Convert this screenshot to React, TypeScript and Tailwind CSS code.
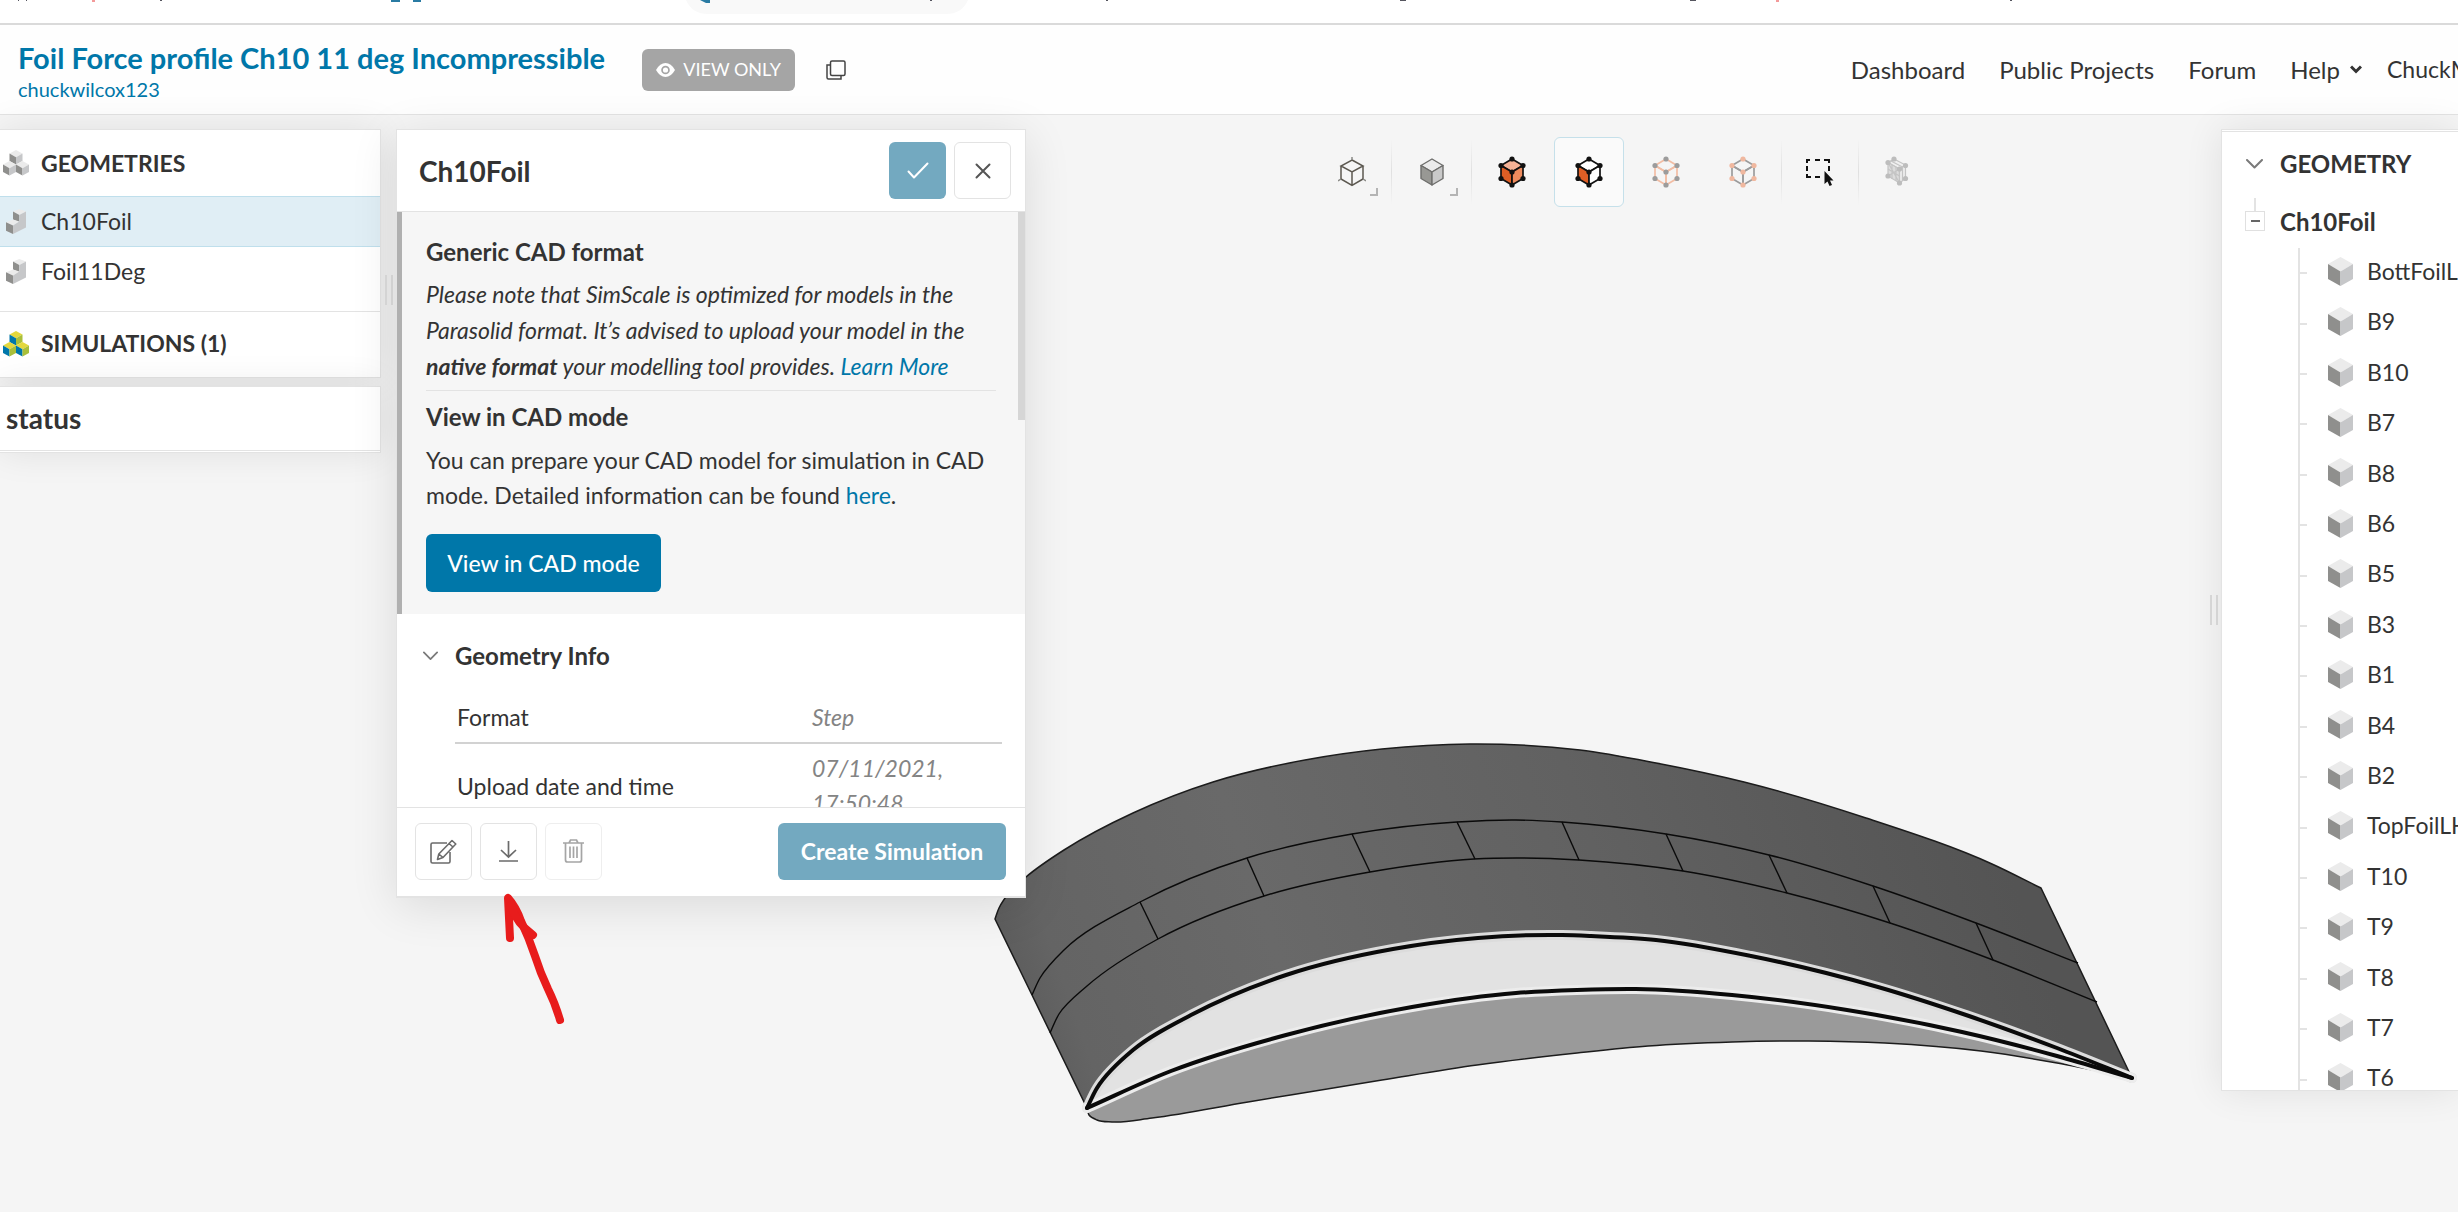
import { ReactNode } from "react";
import { clsx } from "clsx";

type Point = [number, number];

const BODIES = [
    "BottFoilLH", "B9", "B10", "B7", "B8", "B6", "B5", "B3", "B1", "B4", "B2",
    "TopFoilLH", "T10", "T9", "T8", "T7", "T6",
];

const GREY = { top: "#ebebeb", left: "#8f8f8d", right: "#c6c7c9" };
const COLOR = { top: "#e3d83d", left: "#0077ab", right: "#a9bf3a" };

// curves of the foil model, in viewport coordinates
const OUTLINE: Point[] = [[995, 919], [999, 908], [1009, 893], [1026, 877], [1064, 850], [1133, 813], [1213, 782], [1305, 760], [1382, 749], [1470, 744], [1580, 750], [1656, 763], [1744, 782], [1866, 818], [1992, 864], [2041, 888]];
const SEAM_TOP: Point[] = [[1032, 995], [1040, 978], [1064, 950], [1140, 902], [1247, 858], [1352, 834], [1457, 822], [1516, 820], [1562, 822], [1666, 834], [1769, 855], [1873, 886], [1976, 923], [2078, 963]];
const SEAM_BOTTOM: Point[] = [[1050, 1033], [1059, 1014], [1087, 986], [1158, 939], [1264, 896], [1370, 872], [1474, 859], [1523, 858], [1579, 860], [1683, 871], [1787, 893], [1890, 923], [1993, 960], [2097, 1002]];
const FACE_TOP: Point[] = [[1087, 1108], [1097, 1088], [1133, 1050], [1191, 1015], [1286, 975], [1393, 949], [1478, 938], [1562, 935], [1591, 936], [1656, 940], [1751, 956], [1878, 987], [1966, 1015], [2057, 1048], [2132, 1078]];
const FACE_BOTTOM: Point[] = [[1087, 1108], [1171, 1071], [1286, 1035], [1412, 1007], [1516, 993], [1577, 990], [1636, 989], [1732, 995], [1847, 1010], [1962, 1032], [2057, 1056], [2132, 1078]];
const BELLY: Point[] = [[1087, 1108], [1089, 1115], [1097, 1120], [1112, 1122], [1152, 1118], [1248, 1102], [1382, 1080], [1477, 1065], [1577, 1053], [1648, 1046], [1732, 1042], [1809, 1041], [1885, 1043], [1981, 1051], [2057, 1063], [2132, 1078]];
const RIBS: [Point, Point][] = [
    [[1140, 902], [1158, 939]],
    [[1247, 858], [1264, 896]],
    [[1352, 834], [1370, 872]],
    [[1457, 822], [1475, 859]],
    [[1562, 822], [1579, 860]],
    [[1666, 834], [1683, 871]],
    [[1769, 855], [1787, 893]],
    [[1873, 886], [1890, 923]],
    [[1976, 923], [1993, 960]],
];

const distance = (a: Point, b: Point) => Math.hypot(b[0] - a[0], b[1] - a[1]);

// unit-speed tangent at point i, weighted by the lengths of its two chords
const tangent = (pts: Point[], i: number): Point => {
    const a = pts[i - 1];
    const p = pts[i];
    const b = pts[i + 1];
    if(!a || !b){
        const [from, to] = a ? [a, p] : [p, b];
        const d = distance(from, to);
        return [(to[0] - from[0]) / d, (to[1] - from[1]) / d];
    }
    const d1 = distance(a, p);
    const d2 = distance(p, b);
    const mix = (k: 0 | 1) => ((p[k] - a[k]) / d1 * d2 + (b[k] - p[k]) / d2 * d1) / (d1 + d2);
    return [mix(0), mix(1)];
}

const curve = (pts: Point[]) => {
    return pts.slice(1).map((p, i) => {
        const from = pts[i];
        const t0 = tangent(pts, i);
        const t1 = tangent(pts, i + 1);
        const h = distance(from, p) / 3;
        return `C${from[0] + t0[0] * h},${from[1] + t0[1] * h} ${p[0] - t1[0] * h},${p[1] - t1[1] * h} ${p[0]},${p[1]}`;
    }).join(" ");
}

const path = (pts: Point[]) => `M${pts[0].join(",")} ${curve(pts)}`;
const back = (pts: Point[]) => curve([...pts].reverse());

const FoilModel = () => (
    <svg
        viewBox="0 115 2458 1097"
        className="absolute inset-0 h-full w-full"
        role="img"
        aria-label="Ch10Foil model"
    >
        <defs>
            <linearGradient id="skin" gradientUnits="userSpaceOnUse" x1="1020" y1="1060" x2="2070" y2="700">
                <stop offset="0" stopColor="#5a5a5a" />
                <stop offset="0.06" stopColor="#646464" />
                <stop offset="0.25" stopColor="#696969" />
                <stop offset="0.55" stopColor="#616161" />
                <stop offset="0.9" stopColor="#545454" />
            </linearGradient>
        </defs>
        <path d={`${path(OUTLINE)} L2132,1078 ${back(FACE_TOP)} Z`} fill="url(#skin)" stroke="#1c1c1c" strokeWidth="1.5" />
        <path d={`${path(FACE_BOTTOM)} ${back(BELLY)} Z`} fill="#9a9a9a" stroke="#1c1c1c" strokeWidth="1.5" />
        <path d={`${path(FACE_TOP)} ${back(FACE_BOTTOM)} Z`} fill="#e2e2e2" />
        <g fill="none" stroke="#0a0a0a" strokeWidth="1.4">
            <path d={path(SEAM_TOP)} />
            <path d={path(SEAM_BOTTOM)} />
            {RIBS.map(([a, b]) => <path key={a[0]} d={`M${a.join(",")} L${b.join(",")}`} />)}
        </g>
        <g fill="none" strokeLinecap="round">
            <path d={path(FACE_TOP)} stroke="#dcdcdc" strokeWidth="10" />
            <path d={path(FACE_BOTTOM)} stroke="#ececec" strokeWidth="10" />
            <path d={path(FACE_TOP)} stroke="#0a0a0a" strokeWidth="4" />
            <path d={path(FACE_BOTTOM)} stroke="#0a0a0a" strokeWidth="4" />
        </g>
    </svg>
)

const Cube = ({ x = 0, y = 0, c = GREY }) => (
    <g transform={`translate(${x} ${y})`}>
        <path d="M6.5 0 13 3.5 6.5 7.2 0 3.5Z" fill={c.top} />
        <path d="M0 3.5 6.5 7.2V14.5L0 11Z" fill={c.left} />
        <path d="M13 3.5 6.5 7.2V14.5L13 11Z" fill={c.right} />
    </g>
)

const CubesIcon = ({ c = GREY }) => (
    <svg width="26" height="26" viewBox="0 0 26 26" className="shrink-0">
        <Cube x={6.5} y={0} c={c} />
        <Cube x={0} y={11} c={c} />
        <Cube x={13} y={11} c={c} />
    </svg>
)

const PartIcon = () => (
    <svg width="20" height="25" viewBox="0 0 20 25" className="shrink-0">
        <path d="M13.3 0 20 2.5 13.3 6 7 2.5Z" fill="#ebebeb" />
        <path d="M7 2.5 13.3 6V13L7 10.5Z" fill="#8f8f8d" />
        <path d="M0 13.3 7 10.5 13.3 12.5 7 16.5Z" fill="#ebebeb" />
        <path d="M0 13.3 7 16.5V25L0 21.7Z" fill="#8f8f8d" />
        <path d="M7 16.5 13.3 12.5V6L20 2.5V18.5L7 25Z" fill="#c6c7c9" />
    </svg>
)

const BodyIcon = () => (
    <svg width="25" height="29" viewBox="0 0 13 14.5" preserveAspectRatio="none" className="shrink-0">
        <Cube />
    </svg>
)

const VERTICES: Point[] = [[14, 3], [3, 9.5], [25, 9.5], [14, 16], [3, 22.5], [25, 22.5], [14, 29]];

const NodeCube = ({
    edge,
    node,
    faces = ["none", "none", "none"]
}:{
    edge: string;
    node: string;
    faces?: string[];
}) => (
    <svg width="28" height="32" viewBox="0 0 28 32">
        <g stroke={edge} strokeWidth="1.7" strokeLinejoin="round">
            <path d="M14 3 25 9.5 14 16 3 9.5Z" fill={faces[0]} />
            <path d="M3 9.5 14 16V29L3 22.5Z" fill={faces[1]} />
            <path d="M25 9.5 14 16V29L25 22.5Z" fill={faces[2]} />
        </g>
        {VERTICES.map(([x, y]) => <circle key={`${x}-${y}`} cx={x} cy={y} r="2.6" fill={node} />)}
    </svg>
)

const WireCube = () => (
    <svg width="28" height="32" viewBox="0 0 28 32" fill="none" stroke="#5c5850" strokeWidth="1.5">
        <path d="M14 4 25 10 14 16 3 10ZM3 10V23L14 29.5 25 23V10M14 16V29.5" />
        <path d="M14 4V1M3 23 0 25M25 23 28 25" stroke="#8a8a86" />
    </svg>
)

const SolidCube = () => (
    <svg width="28" height="32" viewBox="0 0 28 32" stroke="#6e6e6c" strokeWidth="1.4" strokeLinejoin="round">
        <path d="M14 3 25 9.5 14 16 3 9.5Z" fill="#ebebeb" />
        <path d="M3 9.5 14 16V29L3 22.5Z" fill="#989894" />
        <path d="M25 9.5 14 16V29L25 22.5Z" fill="#c9c9c9" />
    </svg>
)

const BoxSelectIcon = () => (
    <svg width="28" height="30" viewBox="0 0 28 30">
        <path d="M1 5V2H4M9 2H14M18 2H23V5M1 8V13M23 8V13M1 16V19H5M9 19H14" transform="translate(0 1)" fill="none" stroke="#111" strokeWidth="2" />
        <path d="M18.500 14V27L21.500 24.500 23.500 29 26 28 24 23.500H27.500Z" fill="#111" />
    </svg>
)

const MeshCube = () => (
    <svg width="28" height="32" viewBox="0 0 28 32">
        <g stroke="#c4c4c4" strokeWidth="1.2">
            <path d="M11 3 22.500 9 16.500 13 5 6.500Z" fill="#f0f0f0" />
            <path d="M5 6.500 16.500 13V27L5 20Z" fill="#dcdcdc" />
            <path d="M22.500 9 16.500 13V27L22.500 22.500Z" fill="#ededed" />
            <path d="M9 9V23M13 11V25M5 13 16.500 20M5 20 16.500 13M5 6.500 16.500 27M8 5 19.500 11M19.500 11V25" fill="none" />
        </g>
        {[[11, 3], [5, 6.5], [22.5, 9.5], [16.5, 13], [5, 20], [22.5, 22.5], [16.5, 27]].map(([x, y]) => (
            <circle key={`${x}-${y}`} cx={x} cy={y} r="2.6" fill="#bdbdbd" />
        ))}
    </svg>
)

const ChevronIcon = ({ width = 17 }) => (
    <svg width={width} height="10" viewBox="0 0 17 10" fill="none" stroke="#7a7a7a" strokeWidth="2" strokeLinecap="round" strokeLinejoin="round">
        <path d="M1 1 8.500 8.500 16 1" />
    </svg>
)

const ToolButton = ({
    label,
    active,
    menu,
    children
}:{
    label: string;
    active?: boolean;
    menu?: boolean;
    children: ReactNode;
}) => (
    <button
        type="button"
        aria-label={label}
        aria-pressed={active}
        className={clsx(
            "relative flex h-[70px] w-[70px] items-center justify-center rounded-md border",
            active ? "border-[#c5e0ea] bg-[#fafafa]" : "border-transparent"
        )}
    >
        {children}
        {menu && <span className="absolute right-2 bottom-2.5 h-2 w-2 border-r-2 border-b-2 border-[#b4b4b4]" />}
    </button>
)

const Separator = ({ wide }: { wide?: boolean }) => (
    <div className={clsx("flex h-[66px] justify-center", wide ? "w-2.5" : "w-[7px]")}>
        <div className="w-px bg-linear-to-b from-transparent via-[#e0e0e0] to-transparent" />
    </div>
)

const Splitter = ({ className }: { className?: string }) => (
    <div className={clsx("flex h-[30px] w-[15px] shrink-0 justify-center gap-1", className)}>
        <div className="w-0.5 bg-[#dcdcdc]" />
        <div className="w-0.5 bg-[#dcdcdc]" />
    </div>
)

// bottom edge of the browser's bookmark bar
const BrowserStrip = () => (
    <div className="h-[25px] border-b-2 border-[#dadada] bg-white">
        <svg width="100%" height="16" className="block">
            <path d="M686 0Q692 14 708 14H946Q962 14 968 0Z" fill="#f9f9f9" />
            <g fill="#55555f">
                <path d="M18 0h1v1h-1zM26 0h1v1h-1zM160 0h2v1h-2zM930 0h2v1h-2zM1106 0h2v1h-2zM1400 0h6v1h-6zM1690 0h6v1h-6zM2010 0h2v1h-2z" />
            </g>
            <path d="M92 0h3v2h-3zM1776 0h3v2h-3z" fill="#f39a9a" />
            <path d="M391 0h9v2h-9zM413 0h8v2h-8zM700 0h10v3h-4z" fill="#2a7ba3" />
        </svg>
    </div>
)

const Header = () => (
    <header className="flex h-[90px] items-center border-b border-[#e3e3e3] bg-[#fefefe]">
        <div className="pt-[5px] pl-[18px]">
            <h1 className="text-[29px] leading-[34px] font-bold text-[#0077a9]">
                <a href="#project">Foil Force profile Ch10 11 deg Incompressible</a>
            </h1>
            <a href="#owner" className="block text-[20px] leading-7 text-[#0077a9]">chuckwilcox123</a>
        </div>
        <div className="ml-[37px] flex h-[42px] w-[153px] items-center justify-center gap-2 rounded-md bg-[#a5a5a5] text-[18px] text-white">
            <svg width="19" height="14" viewBox="0 0 19 14">
                <path d="M0 7Q4 0 9.500 0T19 7Q15 14 9.500 14T0 7Z" fill="#fff" />
                <circle cx="9.500" cy="7" r="4.300" fill="#a5a5a5" />
                <circle cx="9.500" cy="7" r="2.600" fill="#fff" />
            </svg>
            VIEW ONLY
        </div>
        <button type="button" aria-label="Copy project" className="ml-[31px]">
            <svg width="20" height="20" viewBox="0 0 20 20" fill="none" stroke="#444" strokeWidth="1.500">
                <rect x="4.500" y="1" width="14.500" height="14.500" rx="1.500" />
                <path d="M4.500 5H1V17.500Q1 19 2.500 19H15V15.500" />
            </svg>
        </button>
        <nav className="ml-auto flex items-center text-[24px] text-[#333]">
            <a href="#dashboard" className="mr-[34px]">Dashboard</a>
            <a href="#public" className="mr-[34px]">Public Projects</a>
            <a href="#forum" className="mr-[34px]">Forum</a>
            <button type="button" className="flex items-center gap-2.5">
                Help
                <svg width="12" height="9" viewBox="0 0 12 9" fill="none" stroke="#333" strokeWidth="3">
                    <path d="M1 1.500 6 6.500 11 1.500" />
                </svg>
            </button>
            <a href="#account" className="ml-[25px] w-[71px] overflow-hidden text-[23px]">ChuckM</a>
        </nav>
    </header>
)

const ProjectTree = () => (
    <aside className="relative w-[381px] shrink-0 text-[23px] text-[#333]">
        <div className="border border-l-0 border-[#e3e3e3] bg-white shadow-[0_0_36px_rgba(0,0,0,0.09)]">
            <h2 className="flex h-[66px] items-center gap-3 pl-[3px] font-bold">
                <CubesIcon />
                GEOMETRIES
            </h2>
            <ul className="mb-3.5">
                <li className="flex h-[51px] items-center gap-[15px] border-y border-[#bfdfec] bg-[#e0eef5] pb-px pl-1.5">
                    <PartIcon />
                    Ch10Foil
                </li>
                <li className="flex h-[50px] items-center gap-[15px] pb-0.5 pl-1.5">
                    <PartIcon />
                    Foil11Deg
                </li>
            </ul>
            <h2 className="flex h-[66px] items-center gap-3 border-t border-[#e3e3e3] pb-0.5 pl-[3px] font-bold">
                <CubesIcon c={COLOR} />
                SIMULATIONS (1)
            </h2>
        </div>
        <div className="mt-2 border border-l-0 border-[#e3e3e3] bg-white shadow-[0_0_36px_rgba(0,0,0,0.09)]">
            <h2 className="mb-px flex h-[64px] items-center border-b border-[#e3e3e3] pb-0.5 pl-1.5 text-[28px] font-bold">status</h2>
        </div>
    </aside>
)

const iconButton = "flex h-[57px] w-[57px] items-center justify-center rounded-md border border-[#e3e3e3] bg-white";

const GeometryPanel = () => (
    <section className="relative flex h-[769px] w-[630px] shrink-0 flex-col border border-b-2 border-[#e3e3e3] bg-white text-[23px] text-[#333] shadow-[0_8px_44px_rgba(0,0,0,0.11)]">
        <div className="flex h-[82px] shrink-0 items-center gap-2 border-b border-[#e3e3e3] pr-3.5 pl-[22px]">
            <h2 className="mr-auto text-[28px] font-bold">Ch10Foil</h2>
            <button type="button" aria-label="Apply" className="flex h-[57px] w-[57px] items-center justify-center rounded-md bg-[#73a9c0]">
                <svg width="22" height="17" viewBox="0 0 22 17" fill="none" stroke="#fff" strokeWidth="2" strokeLinecap="round" strokeLinejoin="round">
                    <path d="M1.500 9.500 7 15.500 20.500 1.500" />
                </svg>
            </button>
            <button type="button" aria-label="Close" className={iconButton}>
                <svg width="16" height="16" viewBox="0 0 16 16" fill="none" stroke="#555" strokeWidth="2" strokeLinecap="round">
                    <path d="M1.500 1.500 14.500 14.500M14.500 1.500 1.500 14.500" />
                </svg>
            </button>
        </div>

        <div className="relative min-h-0 flex-1 overflow-hidden">
            <div className="h-[402px] border-l-[5px] border-[#b0b0b0] bg-[#f6f6f6] pt-[22px] pr-[29px] pl-6">
                <h3 className="text-[24px] leading-9 font-bold">Generic CAD format</h3>
                <p className="mt-[6px] border-b border-[#e3e3e3] pb-[6px] leading-9 italic">
                    Please note that SimScale is optimized for models in the<br />
                    Parasolid format. It’s advised to upload your model in the<br />
                    <b>native format</b> your modelling tool provides. <a href="#learn" className="text-[#0077a9]">Learn More</a>
                </p>
                <h3 className="mt-2 text-[24px] leading-9 font-bold">View in CAD mode</h3>
                <p className="mt-2 leading-[35px]">
                    You can prepare your CAD model for simulation in CAD<br />
                    mode. Detailed information can be found <a href="#cad" className="text-[#0077a9]">here</a>.
                </p>
                <button type="button" className="mt-[21px] h-[58px] w-[235px] rounded-md bg-[#0077a9] font-medium text-white">
                    View in CAD mode
                </button>
            </div>
            <div className="absolute top-0 right-0 h-[208px] w-[7px] bg-[#d6d6d6]" />

            <h3 className="flex items-center gap-[17px] pt-6 pl-[26px] text-[24px] leading-9 font-bold">
                <ChevronIcon width={15} />
                Geometry Info
            </h3>
            <table className="mt-[18px] ml-[58px] w-[547px] table-fixed leading-[35px]">
                <tbody>
                    <tr className="border-b-2 border-[#d2d2d2]">
                        <th scope="row" className="w-[357px] pt-2 pb-[7px] pl-0.5 text-left font-normal">Format</th>
                        <td className="text-[#848484] italic">Step</td>
                    </tr>
                    <tr>
                        <th scope="row" className="pt-[7px] pl-0.5 text-left font-normal">Upload date and time</th>
                        <td className="pt-[7px] text-[#848484] italic">07/11/2021,<br />17:50:48</td>
                    </tr>
                </tbody>
            </table>
        </div>

        <div className="flex h-[89px] shrink-0 items-center gap-2 border-t border-[#e3e3e3] pr-[19px] pb-0.5 pl-[18px]">
            <button type="button" aria-label="Rename" className={iconButton}>
                <svg width="27" height="27" viewBox="0 0 27 25" fill="none" stroke="#6b6b6b" strokeWidth="1.600" strokeLinejoin="round">
                    <path d="M17 4H2.500Q1 4 1 5.500V22.500Q1 24 2.500 24H18.500Q20 24 20 22.500V13" />
                    <path d="M22 1.500 25.800 5 13 18.500 7.500 20.500 8.800 15ZM19 4.500 23 8M8.800 15 13 18.500" />
                </svg>
            </button>
            <button type="button" aria-label="Download" className={iconButton}>
                <svg width="19" height="22" viewBox="0 0 19 22" fill="none" stroke="#6b6b6b" strokeWidth="1.700">
                    <path d="M9.500 1V16.500M2 10 9.500 17 17 10M0 21H19" />
                </svg>
            </button>
            <button type="button" aria-label="Delete" disabled className={clsx(iconButton, "opacity-60")}>
                <svg width="21" height="24" viewBox="0 0 21 24" fill="none" stroke="#6b6b6b" strokeWidth="1.700">
                    <path d="M0 4H21M6 4 7.500 1H13.500L15 4M2.500 4V21Q2.500 23 4.500 23H16.500Q18.500 23 18.500 21V4M7 7.500V19M10.500 7.500V19M14 7.500V19" />
                </svg>
            </button>
            <button type="button" className="ml-auto h-[57px] w-[228px] rounded-md bg-[#73a9c0] font-bold text-white">
                Create Simulation
            </button>
        </div>
    </section>
)

const Toolbar = () => (
    <div role="toolbar" aria-label="Viewer" className="relative mt-2 flex flex-1 items-center justify-center self-start pl-4">
        <ToolButton label="Orientation" menu><WireCube /></ToolButton>
        <Separator wide />
        <ToolButton label="Render mode" menu><SolidCube /></ToolButton>
        <Separator wide />
        <ToolButton label="Pick volumes"><NodeCube edge="#111" node="#111" faces={["#f5b296", "#de5e25", "#ee8c5e"]} /></ToolButton>
        <div className="w-[7px]" />
        <ToolButton label="Pick faces" active><NodeCube edge="#111" node="#111" faces={["#fff", "#de5e25", "#fff"]} /></ToolButton>
        <div className="w-[7px]" />
        <ToolButton label="Pick edges"><NodeCube edge="#f2bda4" node="#9c9c9c" /></ToolButton>
        <div className="w-[7px]" />
        <ToolButton label="Pick vertices"><NodeCube edge="#9c9c9c" node="#f0b89f" /></ToolButton>
        <Separator />
        <ToolButton label="Box selection"><BoxSelectIcon /></ToolButton>
        <Separator />
        <ToolButton label="Mesh"><MeshCube /></ToolButton>
    </div>
)

const BodyTree = () => (
    <aside className="relative h-[962px] w-[237px] shrink-0 overflow-hidden border border-r-0 border-[#e3e3e3] bg-white text-[23px] whitespace-nowrap text-[#333] shadow-[0_0_36px_rgba(0,0,0,0.09)]">
        <h2 className="mt-px flex h-[67px] items-center gap-[17px] border-t border-[#e3e3e3] pb-[3px] pl-6 text-[24px] font-bold">
            <ChevronIcon />
            GEOMETRY
        </h2>
        <div className="flex h-[50px] items-start pl-[23px] text-[24px] font-bold">
            <button type="button" aria-label="Collapse Ch10Foil" className="flex w-5 flex-col items-center">
                <span className="h-[13px] w-0.5 bg-[#e3e3e3]" />
                <span className="flex h-5 w-5 items-center justify-center border border-[#e0e0e0]">
                    <span className="h-0.5 w-[9px] bg-[#666]" />
                </span>
            </button>
            <span className="ml-[15px] leading-[47px]">Ch10Foil</span>
        </div>
        <ul className="ml-[76px] flex h-[857px] flex-col border-l-2 border-[#e3e3e3]">
            {BODIES.map(name => (
                <li key={name} className="flex flex-1 items-center">
                    <span className="mr-[21px] h-0.5 w-[7px] shrink-0 bg-[#e3e3e3]" />
                    <span className="flex items-center gap-3.5 pb-1">
                        <BodyIcon />
                        {name}
                    </span>
                </li>
            ))}
        </ul>
    </aside>
)

const Annotation = () => (
    <svg
        width="70"
        height="140"
        viewBox="500 890 70 140"
        className="absolute top-[775px] left-[500px]"
        fill="none"
        stroke="#e81c1c"
        strokeWidth="8"
        strokeLinecap="round"
        strokeLinejoin="round"
    >
        <path d="M560 1020Q555 1003 548 989Q540 972 535 956Q529 938 521 921Q516 907 508 898L510 938" />
        <path d="M511 905Q515 922 533 935" />
    </svg>
)

const App = () => {
    return (
        <div className="flex min-h-screen flex-col overflow-hidden bg-[#f5f5f5] font-[Lato,sans-serif]">
            <BrowserStrip />
            <Header />
            <main className="relative flex flex-1 items-start pt-3.5">
                <FoilModel />
                <ProjectTree />
                <Splitter className="relative mt-[146px]" />
                <GeometryPanel />
                <Toolbar />
                <Splitter className="relative mt-[466px]" />
                <BodyTree />
                <Annotation />
            </main>
        </div>
    )
}

export default App;
